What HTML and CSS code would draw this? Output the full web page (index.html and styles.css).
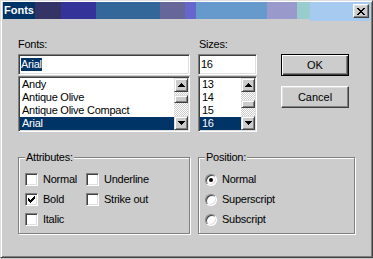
FILE: index.html
```html
<!DOCTYPE html>
<html lang="en">
<head>
    <meta charset="UTF-8">
    <title>Fonts</title>
    <link rel="stylesheet" href="styles.css">
</head>
<body>
    <div class="window">
        <div class="titlebar">
            <span class="seg s1">Fonts</span>
            <span class="seg s2"></span>
            <span class="seg s3"></span>
            <span class="seg s4"></span>
            <span class="seg s5"></span>
            <span class="seg s6"></span>
            <span class="seg s7"></span>
            <span class="seg s8"></span>
            <span class="seg s9"></span>
            <span class="seg s10">
                <button class="close" title="Close">
                    <svg width="8" height="7" viewBox="0 0 8 7" shape-rendering="crispEdges"><path d="M0 0h2v1h1v1h2V1h1V0h2v1H7v1H6v1H5v1h1v1h1v1h1v1H6V6H5V5H3v1H2v1H0V6h1V5h1V4h1V3H2V2H1V1H0z" fill="#000"/></svg>
                </button>
            </span>
        </div>

        <div class="dialog">
            <div class="top">
                <div class="fonts-col">
                    <span class="lbl">Fonts:</span>
                    <div class="edit"><span class="sel">Arial</span></div>
                    <div class="list">
                        <ul class="items">
                            <li>Andy</li>
                            <li>Antique Olive</li>
                            <li>Antique Olive Compact</li>
                            <li class="active">Arial</li>
                        </ul>
                        <div class="scrollbar">
                            <span class="sbtn">
                                <svg width="7" height="4" viewBox="0 0 7 4" shape-rendering="crispEdges"><path d="M3 0h1v1h1v1h1v1h1v1H0V3h1V2h1V1h1z" fill="#000"/></svg>
                            </span>
                            <span class="track"><span class="thumb" style="margin-top:3px"></span></span>
                            <span class="sbtn">
                                <svg width="7" height="4" viewBox="0 0 7 4" shape-rendering="crispEdges"><path d="M0 0h7v1H6v1H5v1H4v1H3V3H2V2H1V1H0z" fill="#000"/></svg>
                            </span>
                        </div>
                    </div>
                </div>

                <div class="sizes-col">
                    <span class="lbl">Sizes:</span>
                    <div class="edit">16</div>
                    <div class="list">
                        <ul class="items">
                            <li>13</li>
                            <li>14</li>
                            <li>15</li>
                            <li class="active">16</li>
                        </ul>
                        <div class="scrollbar">
                            <span class="sbtn">
                                <svg width="7" height="4" viewBox="0 0 7 4" shape-rendering="crispEdges"><path d="M3 0h1v1h1v1h1v1h1v1H0V3h1V2h1V1h1z" fill="#000"/></svg>
                            </span>
                            <span class="track"><span class="thumb" style="margin-top:8px"></span></span>
                            <span class="sbtn">
                                <svg width="7" height="4" viewBox="0 0 7 4" shape-rendering="crispEdges"><path d="M0 0h7v1H6v1H5v1H4v1H3V3H2V2H1V1H0z" fill="#000"/></svg>
                            </span>
                        </div>
                    </div>
                </div>

                <div class="buttons">
                    <button class="btn default">OK</button>
                    <button class="btn">Cancel</button>
                </div>
            </div>

            <div class="bottom">
                <fieldset class="group attrs">
                    <legend>Attributes:</legend>
                    <div class="checks">
                        <span class="check"><span class="box"></span>Normal</span>
                        <span class="check"><span class="box"></span>Underline</span>
                        <span class="check"><span class="box"><svg width="7" height="7" viewBox="0 0 7 7" shape-rendering="crispEdges"><path d="M6 0h1v3H6v1H5v1H4v1H3v1H2V6H1V5H0V2h1v1h1v1h1V3h1V2h1V1h1z" fill="#000"/></svg></span>Bold</span>
                        <span class="check"><span class="box"></span>Strike out</span>
                        <span class="check"><span class="box"></span>Italic</span>
                    </div>
                </fieldset>

                <fieldset class="group position">
                    <legend>Position:</legend>
                    <div class="radios">
                        <span class="radio"><span class="dot on"></span>Normal</span>
                        <span class="radio"><span class="dot"></span>Superscript</span>
                        <span class="radio"><span class="dot"></span>Subscript</span>
                    </div>
                </fieldset>
            </div>
        </div>
    </div>
</body>
</html>
```

FILE: styles.css
```css
body {
    margin: 0;
    background-color: #cccccc;
    font-family: "Liberation Sans", Arial, sans-serif;
    font-size: 11px;
    line-height: 13px;
    letter-spacing: -0.25px;
    color: #000;
}

.window {
    box-sizing: border-box;
    width: 373px;
    height: 258px;
    padding: 1px 2px 0 2px;
    border: 1px solid;
    border-color: #dfdfdf #404040 #404040 #dfdfdf;
    box-shadow: inset 1px 1px #fff, inset -1px -1px #808080;
    background-color: #cccccc;
}

/* title bar made of colour blocks */
.titlebar {
    display: flex;
    height: 17px;
}

.seg {
    height: 17px;
    flex: none;
}

.s1 {
    width: 31px;
    padding-left: 1px;
    background-color: #003366;
    color: #fff;
    font-weight: bold;
    line-height: 17px;
    letter-spacing: 0;
}

.s2 { width: 26px; background-color: #333366; }
.s3 { width: 35px; background-color: #333399; }
.s4 { width: 64px; background-color: #336699; }
.s5 { width: 25px; background-color: #666699; }
.s6 { width: 11px; background-color: #6666cc; }
.s7 { width: 71px; background-color: #6699cc; }
.s8 { width: 30px; background-color: #9999cc; }
.s9 { width: 13px; background-color: #99cccc; }

.s10 {
    flex: 1;
    display: flex;
    justify-content: flex-end;
    align-items: flex-start;
    padding: 2px 1px 0 0;
    background-color: #a6caf0;
}

.close {
    box-sizing: border-box;
    width: 16px;
    height: 14px;
    padding: 0;
    display: flex;
    align-items: center;
    justify-content: center;
    background-color: #cccccc;
    border: 1px solid;
    border-color: #fff #404040 #404040 #fff;
    box-shadow: inset -1px -1px #808080, inset 1px 1px #dfdfdf;
}

/* dialog body */
.dialog {
    padding: 19px 0 0 15px;
}

.top {
    display: flex;
    align-items: flex-start;
}

.fonts-col {
    width: 172px;
}

.sizes-col {
    width: 59px;
    margin-left: 8px;
}

.lbl {
    display: block;
    height: 13px;
    margin-bottom: 3px;
}

.sizes-col .lbl {
    padding-left: 1px;
}

.edit {
    box-sizing: border-box;
    height: 21px;
    padding: 3px 2px;
    background-color: #fff;
    border: 1px solid;
    border-color: #808080 #fff #fff #808080;
    box-shadow: inset 1px 1px #404040, inset -1px -1px #dfdfdf;
    white-space: nowrap;
}

.sel {
    display: inline-block;
    height: 13px;
    background-color: #003366;
    color: #fff;
}

.list {
    box-sizing: border-box;
    height: 56px;
    margin-top: 1px;
    padding: 1px;
    display: flex;
    background-color: #fff;
    border: 1px solid;
    border-color: #808080 #fff #fff #808080;
    box-shadow: inset 1px 1px #404040, inset -1px -1px #dfdfdf;
}

.items {
    flex: 1;
    list-style: none;
    margin: 0;
    padding: 0;
    overflow: hidden;
}

.items li {
    height: 13px;
    padding-left: 2px;
    white-space: nowrap;
}

.items li.active {
    background-color: #003366;
    color: #fff;
}

.scrollbar {
    width: 14px;
    display: flex;
    flex-direction: column;
}

.sbtn, .thumb {
    box-sizing: border-box;
    background-color: #cccccc;
    border: 1px solid;
    border-color: #dfdfdf #404040 #404040 #dfdfdf;
    box-shadow: inset 1px 1px #fff, inset -1px -1px #808080;
}

.sbtn {
    height: 14px;
    display: flex;
    align-items: center;
    justify-content: center;
}

.track {
    flex: 1;
    background: repeating-conic-gradient(#fff 0 25%, #cccccc 0 50%) 0 0 / 2px 2px;
}

.thumb {
    display: block;
    height: 8px;
}

.buttons {
    width: 68px;
    margin-left: 24px;
    padding-top: 16px;
    display: flex;
    flex-direction: column;
    gap: 10px;
}

.btn {
    box-sizing: border-box;
    width: 68px;
    height: 22px;
    padding: 0;
    font: inherit;
    color: #000;
    background-color: #cccccc;
    border: 1px solid;
    border-color: #fff #404040 #404040 #fff;
    box-shadow: inset -1px -1px #808080, inset 1px 1px #dfdfdf;
}

.btn.default {
    border-color: #000;
    box-shadow: inset 1px 1px #fff, inset -1px -1px #404040, inset -2px -2px #808080;
}

/* group boxes */
.bottom {
    display: flex;
    gap: 8px;
    margin-top: 19px;
}

.group {
    box-sizing: border-box;
    margin: 0;
    min-width: 0;
    padding: 9px 6px 7px;
    border: 1px solid #808080;
    box-shadow: inset 1px 1px #fff, 1px 1px #fff;
}

.attrs {
    width: 172px;
}

.position {
    width: 157px;
}

.group legend {
    padding: 0 1px;
    background-color: #cccccc;
}

.checks {
    display: grid;
    grid-template-columns: 61px auto;
    row-gap: 7px;
}

.check, .radio {
    display: flex;
    align-items: center;
    gap: 5px;
    height: 13px;
    white-space: nowrap;
}

.box {
    box-sizing: border-box;
    width: 13px;
    height: 13px;
    display: flex;
    align-items: center;
    justify-content: center;
    background-color: #fff;
    border: 1px solid;
    border-color: #808080 #fff #fff #808080;
    box-shadow: inset 1px 1px #404040, inset -1px -1px #dfdfdf;
}

.radios {
    display: flex;
    flex-direction: column;
    gap: 7px;
}

.dot {
    box-sizing: border-box;
    width: 12px;
    height: 12px;
    display: flex;
    align-items: center;
    justify-content: center;
    border-radius: 50%;
    background-color: #fff;
    border: 1px solid;
    border-color: #808080 #fff #fff #808080;
    box-shadow: inset 1px 1px #404040, inset -1px -1px #dfdfdf;
}

.dot.on::after {
    content: "";
    width: 4px;
    height: 4px;
    border-radius: 50%;
    background-color: #000;
}
```
